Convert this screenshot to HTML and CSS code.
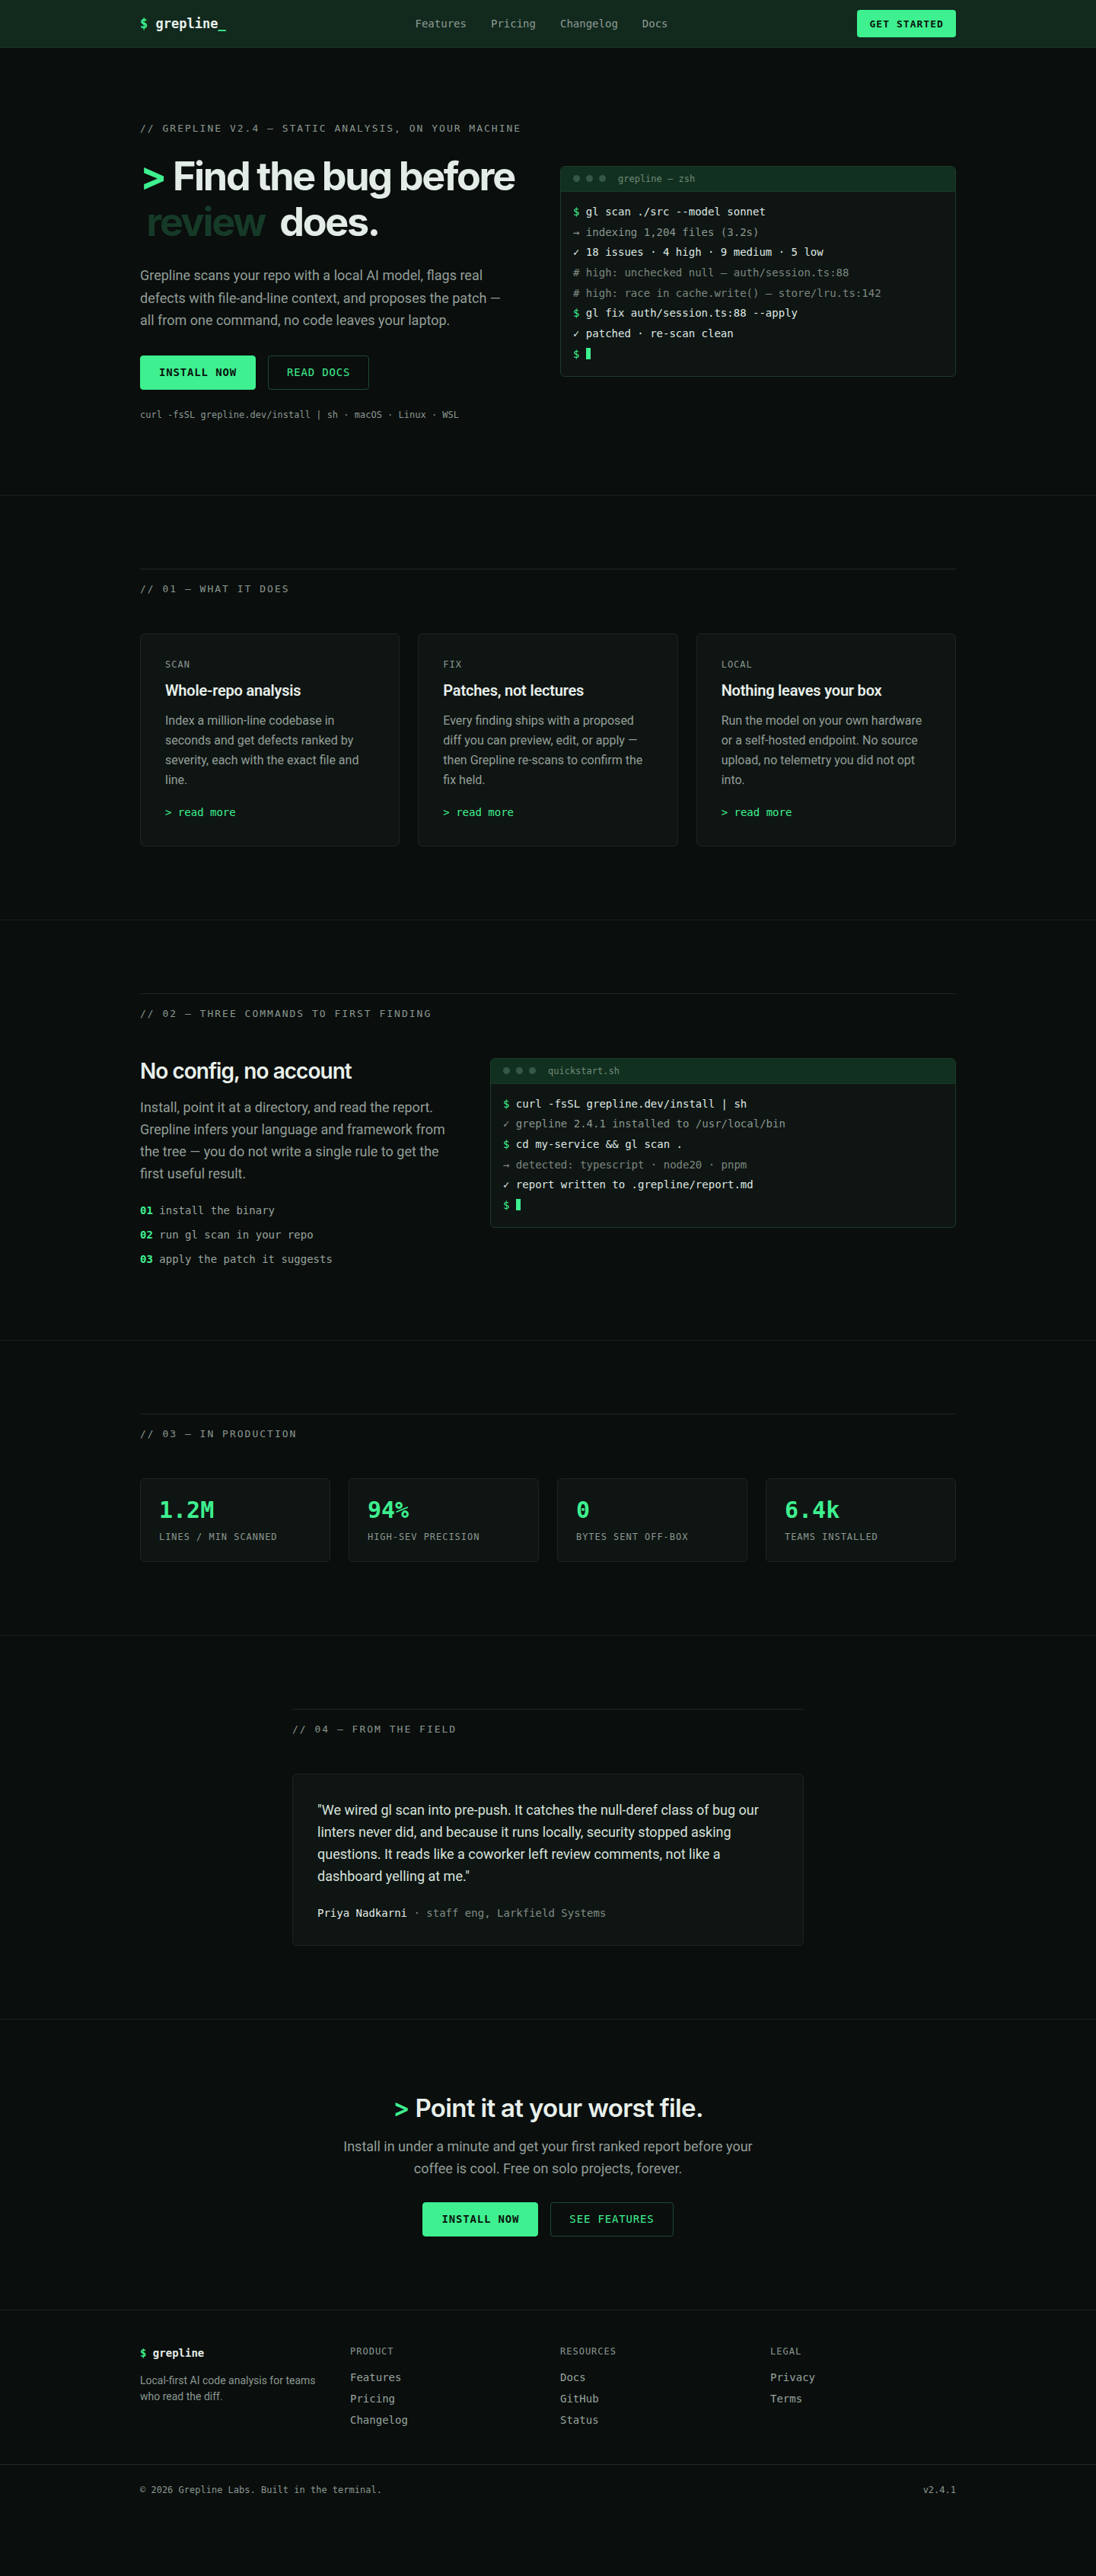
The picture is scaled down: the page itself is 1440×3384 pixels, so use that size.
FILE: index.html
```html
<!DOCTYPE html>
<html lang="en">
<head>
<meta charset="utf-8">
<title>grepline — static analysis on your machine</title>
<link rel="stylesheet" href="styles.css">
</head>
<body>
<header class="nav">
  <div class="container nav-inner">
    <a class="logo" href="#"><span class="g">$</span> grepline<span class="g">_</span></a>
    <nav class="nav-links">
      <a href="#">Features</a>
      <a href="#">Pricing</a>
      <a href="#">Changelog</a>
      <a href="#">Docs</a>
    </nav>
    <a class="btn-nav" href="#">GET STARTED</a>
  </div>
</header>

<section class="hero">
  <div class="container hero-grid">
    <div class="hero-copy">
      <p class="eyebrow">// GREPLINE V2.4 — STATIC ANALYSIS, ON YOUR MACHINE</p>
      <h1 class="hero-title"><span class="g">&gt;</span> Find the bug before <span class="ghost">review</span> does.</h1>
      <p class="lead">Grepline scans your repo with a local AI model, flags real defects with file-and-line context, and proposes the patch — all from one command, no code leaves your laptop.</p>
      <div class="btn-row">
        <a class="btn btn-primary" href="#">INSTALL NOW</a>
        <a class="btn btn-ghost" href="#">READ DOCS</a>
      </div>
      <p class="install-line">curl -fsSL grepline.dev/install | sh · macOS · Linux · WSL</p>
    </div>
    <div class="term">
      <div class="term-head"><span class="dot"></span><span class="dot"></span><span class="dot"></span><span class="term-title">grepline — zsh</span></div>
      <div class="term-body">
        <div class="ln"><span class="g">$</span> gl scan ./src --model sonnet</div>
        <div class="ln mut">→ indexing 1,204 files (3.2s)</div>
        <div class="ln">✓ 18 issues · 4 high · 9 medium · 5 low</div>
        <div class="ln dim"># high: unchecked null — auth/session.ts:88</div>
        <div class="ln dim"># high: race in cache.write() — store/lru.ts:142</div>
        <div class="ln"><span class="g">$</span> gl fix auth/session.ts:88 --apply</div>
        <div class="ln">✓ patched · re-scan clean</div>
        <div class="ln"><span class="g">$</span> <span class="cursor"></span></div>
      </div>
    </div>
  </div>
</section>

<section class="section">
  <div class="container">
    <p class="sec-label">// 01 — WHAT IT DOES</p>
    <div class="cards">
      <article class="card">
        <p class="card-tag">SCAN</p>
        <h3 class="card-title">Whole-repo analysis</h3>
        <p class="card-text">Index a million-line codebase in seconds and get defects ranked by severity, each with the exact file and line.</p>
        <a class="card-link" href="#">&gt; read more</a>
      </article>
      <article class="card">
        <p class="card-tag">FIX</p>
        <h3 class="card-title">Patches, not lectures</h3>
        <p class="card-text">Every finding ships with a proposed diff you can preview, edit, or apply — then Grepline re-scans to confirm the fix held.</p>
        <a class="card-link" href="#">&gt; read more</a>
      </article>
      <article class="card">
        <p class="card-tag">LOCAL</p>
        <h3 class="card-title">Nothing leaves your box</h3>
        <p class="card-text">Run the model on your own hardware or a self-hosted endpoint. No source upload, no telemetry you did not opt into.</p>
        <a class="card-link" href="#">&gt; read more</a>
      </article>
    </div>
  </div>
</section>

<section class="section">
  <div class="container">
    <p class="sec-label">// 02 — THREE COMMANDS TO FIRST FINDING</p>
    <div class="qs-grid">
      <div class="qs-copy">
        <h2 class="h2">No config, no account</h2>
        <p class="qs-text">Install, point it at a directory, and read the report. Grepline infers your language and framework from the tree — you do not write a single rule to get the first useful result.</p>
        <ol class="steps">
          <li><span class="g b">01</span> install the binary</li>
          <li><span class="g b">02</span> run gl scan in your repo</li>
          <li><span class="g b">03</span> apply the patch it suggests</li>
        </ol>
      </div>
      <div class="term">
        <div class="term-head"><span class="dot"></span><span class="dot"></span><span class="dot"></span><span class="term-title">quickstart.sh</span></div>
        <div class="term-body">
          <div class="ln"><span class="g">$</span> curl -fsSL grepline.dev/install | sh</div>
          <div class="ln mut">✓ grepline 2.4.1 installed to /usr/local/bin</div>
          <div class="ln"><span class="g">$</span> cd my-service &amp;&amp; gl scan .</div>
          <div class="ln dim">→ detected: typescript · node20 · pnpm</div>
          <div class="ln">✓ report written to .grepline/report.md</div>
          <div class="ln"><span class="g">$</span> <span class="cursor"></span></div>
        </div>
      </div>
    </div>
  </div>
</section>

<section class="section">
  <div class="container">
    <p class="sec-label">// 03 — IN PRODUCTION</p>
    <div class="stats">
      <div class="stat"><div class="stat-num">1.2M</div><div class="stat-label">LINES / MIN SCANNED</div></div>
      <div class="stat"><div class="stat-num">94%</div><div class="stat-label">HIGH-SEV PRECISION</div></div>
      <div class="stat"><div class="stat-num">0</div><div class="stat-label">BYTES SENT OFF-BOX</div></div>
      <div class="stat"><div class="stat-num">6.4k</div><div class="stat-label">TEAMS INSTALLED</div></div>
    </div>
  </div>
</section>

<section class="section">
  <div class="container narrow">
    <p class="sec-label">// 04 — FROM THE FIELD</p>
    <figure class="quote">
      <blockquote class="quote-text">"We wired gl scan into pre-push. It catches the null-deref class of bug our linters never did, and because it runs locally, security stopped asking questions. It reads like a coworker left review comments, not like a dashboard yelling at me."</blockquote>
      <figcaption class="quote-by"><span class="who">Priya Nadkarni</span> · staff eng, Larkfield Systems</figcaption>
    </figure>
  </div>
</section>

<section class="section cta">
  <div class="container cta-inner">
    <h2 class="cta-title"><span class="g">&gt;</span> Point it at your worst file.</h2>
    <p class="cta-text">Install in under a minute and get your first ranked report before your coffee is cool. Free on solo projects, forever.</p>
    <div class="btn-row center">
      <a class="btn btn-primary" href="#">INSTALL NOW</a>
      <a class="btn btn-ghost" href="#">SEE FEATURES</a>
    </div>
  </div>
</section>

<footer class="footer">
  <div class="container foot-grid">
    <div class="foot-brand">
      <div class="foot-logo"><span class="g">$</span> grepline</div>
      <p class="foot-tag">Local-first AI code analysis for teams who read the diff.</p>
    </div>
    <div class="foot-col">
      <p class="foot-head">PRODUCT</p>
      <a href="#">Features</a><a href="#">Pricing</a><a href="#">Changelog</a>
    </div>
    <div class="foot-col">
      <p class="foot-head">RESOURCES</p>
      <a href="#">Docs</a><a href="#">GitHub</a><a href="#">Status</a>
    </div>
    <div class="foot-col">
      <p class="foot-head">LEGAL</p>
      <a href="#">Privacy</a><a href="#">Terms</a>
    </div>
  </div>
  <div class="foot-bar">
    <div class="container foot-bar-inner">
      <span>© 2026 Grepline Labs. Built in the terminal.</span>
      <span>v2.4.1</span>
    </div>
  </div>
</footer>
</body>
</html>
```

FILE: styles.css
```css
* { box-sizing: border-box; }
html { background: #0a0e0d; }
body {
  margin: 0;
  background: #0a0e0d;
  color: #e3ece6;
  font-family: Roboto, "Noto Sans", "Liberation Sans", sans-serif;
}
a { color: inherit; text-decoration: none; }
p, h1, h2, h3, figure, blockquote, ol { margin: 0; padding: 0; }

.eyebrow, .sec-label, .term, .btn, .btn-nav, .nav, .install-line,
.card-tag, .card-link, .steps, .stat, .quote-by, .foot-logo, .foot-head, .foot-col, .foot-bar {
  font-family: "DejaVu Sans Mono", "Liberation Mono", monospace;
}
.g { color: #3ef08f; }
.b { font-weight: 700; }

.container { max-width: 1120px; margin: 0 auto; padding: 0 24px; }
.container.narrow { max-width: 720px; }

/* nav */
.nav { background: #12291e; border-bottom: 1px solid #163224; }
.nav-inner { display: flex; align-items: center; justify-content: space-between; height: 62px; }
.logo { font-size: 17px; font-weight: 700; color: #e8f0eb; }
.nav-links { display: flex; gap: 32px; font-size: 14px; }
.nav-links a { color: #8e9c94; }
.btn-nav {
  background: #3ef08f; color: #08140d; font-weight: 700; font-size: 13px;
  letter-spacing: 0.08em; height: 36px; padding: 0 16px; border-radius: 4px;
  display: flex; align-items: center;
}

/* hero */
.hero { padding: 96px 0; }
.hero-grid { display: grid; grid-template-columns: 1fr 1fr; gap: 32px; align-items: center; }
.eyebrow { font-size: 13px; letter-spacing: 2px; color: #8b9890; line-height: 20px; }
.hero-title {
  margin-top: 23px;
  font-family: Inter, "Noto Sans", sans-serif;
  font-size: 52px; line-height: 60px; font-weight: 700; letter-spacing: -0.045em;
  color: #e3ece6;
}
.ghost { color: #163a28; padding: 0 0.18em 0 0.16em; }
.lead { margin-top: 25px; font-size: 18px; line-height: 29.5px; color: #939f98; max-width: 488px; }
.btn-row { display: flex; gap: 16px; margin-top: 31px; }
.btn-row.center { justify-content: center; margin-top: 30px; }
.btn {
  font-size: 14px; letter-spacing: 0.06em; line-height: 17px;
  padding: 13px 24px; border-radius: 4px; border: 1px solid #3ef08f;
}
.btn-primary { background: #3ef08f; color: #08140d; font-weight: 700; }
.btn-ghost { border-color: #1f4a33; color: #3ef08f; }
.install-line { margin-top: 24px; font-size: 12px; color: #8b9890; line-height: 18px; }

/* terminal */
.term { background: #0f1513; border: 1px solid #1d3b2b; border-radius: 6px; overflow: hidden; }
.term-head {
  background: #12301f; height: 33px; display: flex; align-items: center; gap: 8px;
  padding: 0 16px; border-bottom: 1px solid #1a3a29;
}
.dot { width: 9px; height: 9px; border-radius: 50%; background: #355846; }
.term-title { margin-left: 8px; font-size: 12px; color: #6f8a7a; }
.term-body { padding: 13px 16px 15px; font-size: 14px; line-height: 26.7px; color: #dfe9e3; }
.ln { white-space: pre; }
.ln.mut { color: #8a978f; }
.ln.dim { color: #7b877f; }
.cursor { display: inline-block; width: 6px; height: 15px; background: #3ef08f; vertical-align: -2px; }

/* sections */
.section { border-top: 1px solid #1a211e; padding: 96px 0; }
.sec-label {
  border-top: 1px solid #1f2824; padding-top: 16px;
  font-size: 13px; letter-spacing: 2px; color: #8b9890; line-height: 20px;
}

.cards { margin-top: 48px; display: grid; grid-template-columns: repeat(3, 1fr); gap: 24px; }
.card { background: #0f1513; border: 1px solid #1c2521; border-radius: 6px; padding: 32px 32px 34px; }
.card-tag { font-size: 12px; letter-spacing: 1px; color: #8b9890; line-height: 16px; }
.card-title { margin-top: 12px; font-size: 20px; line-height: 28px; font-weight: 600; color: #e8f0eb; letter-spacing: -0.01em; }
.card-text { margin-top: 13px; font-size: 16px; line-height: 26px; color: #939f98; }
.card-link { display: block; margin-top: 19px; font-size: 14px; color: #3ef08f; line-height: 20px; }

.qs-grid { margin-top: 48px; display: grid; grid-template-columns: 412px 1fr; gap: 48px; align-items: start; }
.h2 { font-family: Inter, "Noto Sans", sans-serif; font-size: 28px; line-height: 34px; font-weight: 600; letter-spacing: -0.035em; color: #e8f0eb; }
.qs-text { margin-top: 16px; font-size: 18px; line-height: 29px; color: #939f98; }
.steps { list-style: none; margin-top: 24px; font-size: 14px; line-height: 20px; color: #98a49d; display: flex; flex-direction: column; gap: 12px; }

.stats { margin-top: 48px; display: grid; grid-template-columns: repeat(4, 1fr); gap: 24px; }
.stat { background: #0f1513; border: 1px solid #1c2521; border-radius: 6px; padding: 23px 24px 24px; }
.stat-num { font-size: 30px; line-height: 36px; font-weight: 700; color: #3ef08f; }
.stat-label { margin-top: 9px; font-size: 12px; letter-spacing: 0.08em; line-height: 16px; color: #8b9890; }

.quote { margin-top: 48px; background: #0f1513; border: 1px solid #1c2521; border-radius: 6px; padding: 32px; }
.quote-text { font-size: 18px; line-height: 29.3px; color: #d8e3dc; }
.quote-by { margin-top: 23px; font-size: 14px; line-height: 20px; color: #7f8c85; }
.who { color: #e3ece6; }

.cta-inner { text-align: center; }
.cta-title { font-family: Inter, "Noto Sans", sans-serif; font-size: 33px; line-height: 40px; font-weight: 600; letter-spacing: -0.02em; color: #e8f0eb; }
.cta-text { margin: 16px auto 0; max-width: 560px; font-size: 18px; line-height: 29px; color: #939f98; }

/* footer */
.footer { border-top: 1px solid #1a211e; }
.foot-grid { display: grid; grid-template-columns: repeat(4, 1fr); gap: 32px; padding-top: 46px; padding-bottom: 44px; }
.foot-logo { font-size: 14px; font-weight: 700; color: #e3ece6; line-height: 20px; }
.foot-tag { margin-top: 16px; font-size: 14px; line-height: 21px; color: #8b9890; max-width: 240px; }
.foot-head { font-size: 12px; letter-spacing: 1px; color: #8b9890; line-height: 16px; margin-bottom: 12px; }
.foot-col a { display: block; font-size: 14px; line-height: 28px; color: #98a49d; }
.foot-bar { border-top: 1px solid #1f2824; }
.foot-bar-inner { display: flex; justify-content: space-between; padding-top: 24px; padding-bottom: 24px; font-size: 12px; line-height: 18px; color: #8b9890; }
```
